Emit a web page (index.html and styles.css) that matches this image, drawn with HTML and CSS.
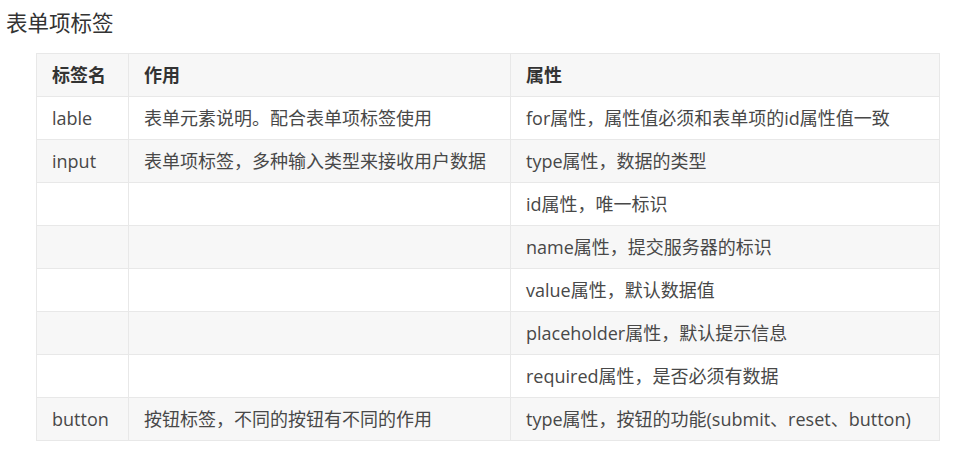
FILE: index.html
```html
<!DOCTYPE html>
<html lang="zh">
<head>
<meta charset="utf-8">
<link rel="stylesheet" href="styles.css">
</head>
<body>
<h3 class="title">表单项标签</h3>
<table class="tbl">
  <colgroup><col class="c1"><col class="c2"><col class="c3"></colgroup>
  <thead>
    <tr><th>标签名</th><th>作用</th><th>属性</th></tr>
  </thead>
  <tbody>
    <tr><td>lable</td><td>表单元素说明。配合表单项标签使用</td><td>for属性，属性值必须和表单项的id属性值一致</td></tr>
    <tr><td>input</td><td>表单项标签，多种输入类型来接收用户数据</td><td>type属性，数据的类型</td></tr>
    <tr><td></td><td></td><td>id属性，唯一标识</td></tr>
    <tr><td></td><td></td><td>name属性，提交服务器的标识</td></tr>
    <tr><td></td><td></td><td>value属性，默认数据值</td></tr>
    <tr><td></td><td></td><td>placeholder属性，默认提示信息</td></tr>
    <tr><td></td><td></td><td>required属性，是否必须有数据</td></tr>
    <tr><td>button</td><td>按钮标签，不同的按钮有不同的作用</td><td>type属性，按钮的功能(submit、reset、button)</td></tr>
  </tbody>
</table>
</body>
</html>
```
FILE: styles.css
```css
html, body {
  margin: 0;
  padding: 0;
  background: #ffffff;
}
body {
  font-family: "Open Sans", "Noto Sans CJK SC", sans-serif;
  color: #333333;
}
.title {
  margin: 0;
  padding: 8px 0 0 6px;
  height: 44px;
  box-sizing: border-box;
  font-size: 21.5px;
  font-weight: normal;
  line-height: 30px;
  color: #333333;
}
.tbl {
  margin: 9px 0 0 36px;
  border-collapse: collapse;
  table-layout: fixed;
  width: 903px;
  font-size: 18px;
  color: #484848;
}
.c1 { width: 92px; }
.c2 { width: 382px; }
.c3 { width: 429px; }
.tbl th, .tbl td {
  height: 43px;
  box-sizing: border-box;
  padding: 0 15px;
  text-align: left;
  vertical-align: middle;
  border: 1px solid #e8e8e8;
  white-space: nowrap;
  line-height: 24px;
}
.tbl th {
  font-weight: bold;
  color: #333333;
}
.tbl thead tr { background: #f7f7f7; }
.tbl tbody tr:nth-child(odd) { background: #ffffff; }
.tbl tbody tr:nth-child(even) { background: #f7f7f7; }
```
